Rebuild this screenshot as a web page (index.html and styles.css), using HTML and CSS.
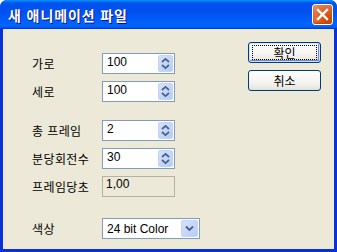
FILE: index.html
```html
<!DOCTYPE html>
<html lang="ko">
<head>
    <meta charset="UTF-8">
    <meta name="viewport" content="width=device-width, initial-scale=1.0">
    <title>새 애니메이션 파일</title>
    <link rel="stylesheet" href="styles.css">
</head>
<body>
    <div class="window">
        <div class="titlebar">
            <span class="title">새 애니메이션 파일</span>
            <button type="button" class="btn-close" aria-label="닫기">
                <svg width="13" height="13" viewBox="0 0 13 13"><path d="M2 2 L11 11 M11 2 L2 11" stroke="#fff" stroke-width="2.4" stroke-linecap="square"/></svg>
            </button>
        </div>
        <div class="client">
            <div class="fields">
                <div class="row">
                    <label>가로</label>
                    <div class="spin-box"><span class="value">100</span><span class="spin"></span></div>
                </div>
                <div class="row gap-small">
                    <label>세로</label>
                    <div class="spin-box"><span class="value">100</span><span class="spin"></span></div>
                </div>
                <div class="row gap-big">
                    <label>총 프레임</label>
                    <div class="spin-box"><span class="value">2</span><span class="spin"></span></div>
                </div>
                <div class="row gap-small">
                    <label>분당회전수</label>
                    <div class="spin-box"><span class="value">30</span><span class="spin"></span></div>
                </div>
                <div class="row gap-small">
                    <label>프레임당초</label>
                    <div class="readonly-box"><span class="value">1,00</span></div>
                </div>
                <div class="row gap-select">
                    <label>색상</label>
                    <div class="select-box"><span class="value">24 bit Color</span><span class="drop"></span></div>
                </div>
            </div>
            <div class="actions">
                <button type="button" class="btn btn-default"><span class="focus">확인</span></button>
                <button type="button" class="btn">취소</button>
            </div>
        </div>
    </div>

    <script>
        // spinner arrows are the same everywhere, so fill them in once
        const upDown = '<svg width="9" height="13" viewBox="0 0 9 13"><path d="M1 5 L4.5 1.8 L8 5" fill="none" stroke="#4d6185" stroke-width="1.7"/><path d="M1 8 L4.5 11.2 L8 8" fill="none" stroke="#4d6185" stroke-width="1.7"/></svg>';
        const down = '<svg width="9" height="7" viewBox="0 0 9 7"><path d="M1 1.5 L4.5 5 L8 1.5" fill="none" stroke="#4d6185" stroke-width="1.8"/></svg>';
        document.querySelectorAll('.spin').forEach(el => el.innerHTML = upDown);
        document.querySelectorAll('.drop').forEach(el => el.innerHTML = down);
    </script>
</body>
</html>
```

FILE: styles.css
```css
body {
    margin: 0;
    font-family: "Noto Sans CJK KR", "DejaVu Sans", sans-serif;
    font-size: 12px;
    color: #000;
}

.window {
    width: 337px;
    height: 252px;
    box-sizing: border-box;
    display: flex;
    flex-direction: column;
    background: #0831d9;
    border-radius: 7px 7px 0 0;
    overflow: hidden;
}

.titlebar {
    height: 29px;
    flex: none;
    display: flex;
    align-items: center;
    padding: 0 4px 0 8px;
    background: linear-gradient(#0997ff, #0053ee 10%, #0050ee 40%, #0066ff 88%, #005bff 94%, #003dd7 97%, #003dd7);
}

.title {
    flex: 1;
    color: #fff;
    font-weight: bold;
    font-size: 14px;
    letter-spacing: 0.9px;
    text-shadow: 1px 1px #0f1089;
    margin-top: 1px;
}

.btn-close {
    width: 21px;
    height: 21px;
    padding: 0;
    display: flex;
    align-items: center;
    justify-content: center;
    border: 1px solid #fff;
    border-radius: 3px;
    background: radial-gradient(circle at 80% 80%, #cc4600, #dc6527 50%, #e37b4a 75%, #f0a180);
    box-shadow: inset 0 -1px 2px #c23b0a;
}

.client {
    flex: 1;
    display: flex;
    margin: 0 3px 3px 3px;
    padding: 13px 13px 0 29px;
    background: #ece9d8;
}

.fields {
    margin-top: 11px;
}

.row {
    display: grid;
    grid-template-columns: 70px auto;
    align-items: center;
}

.gap-small {
    margin-top: 7px;
}

.gap-big {
    margin-top: 18px;
}

.gap-select {
    margin-top: 21px;
}

.row label {
    line-height: 14px;
    letter-spacing: 0.4px;
}

.spin-box, .readonly-box, .select-box {
    box-sizing: border-box;
    height: 21px;
    display: flex;
    border: 1px solid #7f9db9;
    font-family: "Liberation Sans", Arial, sans-serif;
    font-size: 12px;
}

.spin-box {
    width: 73px;
    background: #fff;
    padding: 1px;
}

.readonly-box {
    width: 73px;
    background: #ece9d8;
    border: 1px solid #b5b2a4;
}

.select-box {
    width: 98px;
    background: #fff;
    padding: 1px;
    align-items: center;
}

.value {
    flex: 1;
    padding: 0 0 0 3px;
    line-height: 14px;
}

.select-box .value {
    padding-top: 0;
}

.spin, .drop {
    width: 15px;
    display: flex;
    align-items: center;
    justify-content: center;
    background: linear-gradient(135deg, #d5e2fb, #b6cbf6);
    border: 1px solid #c3d3fd;
    border-radius: 2px;
    box-sizing: border-box;
}

.drop {
    width: 17px;
    align-self: stretch;
}

.actions {
    margin-left: auto;
    display: flex;
    flex-direction: column;
    gap: 7px;
}

.btn {
    width: 73px;
    height: 21px;
    padding: 0;
    border: 1px solid #003c74;
    border-radius: 3px;
    background: linear-gradient(#ffffff, #f5f4ef 60%, #e3e2da);
    font-family: inherit;
    font-size: 12px;
    color: #000;
    display: flex;
    align-items: center;
    justify-content: center;
}

.btn-default {
    box-shadow: inset 0 0 0 1px #cee7ff, inset -1px -1px 0 1px #6982ee;
}

.btn-default .focus {
    width: 63px;
    height: 13px;
    line-height: 13px;
    border: 1px dotted #000;
    text-align: center;
}
```
